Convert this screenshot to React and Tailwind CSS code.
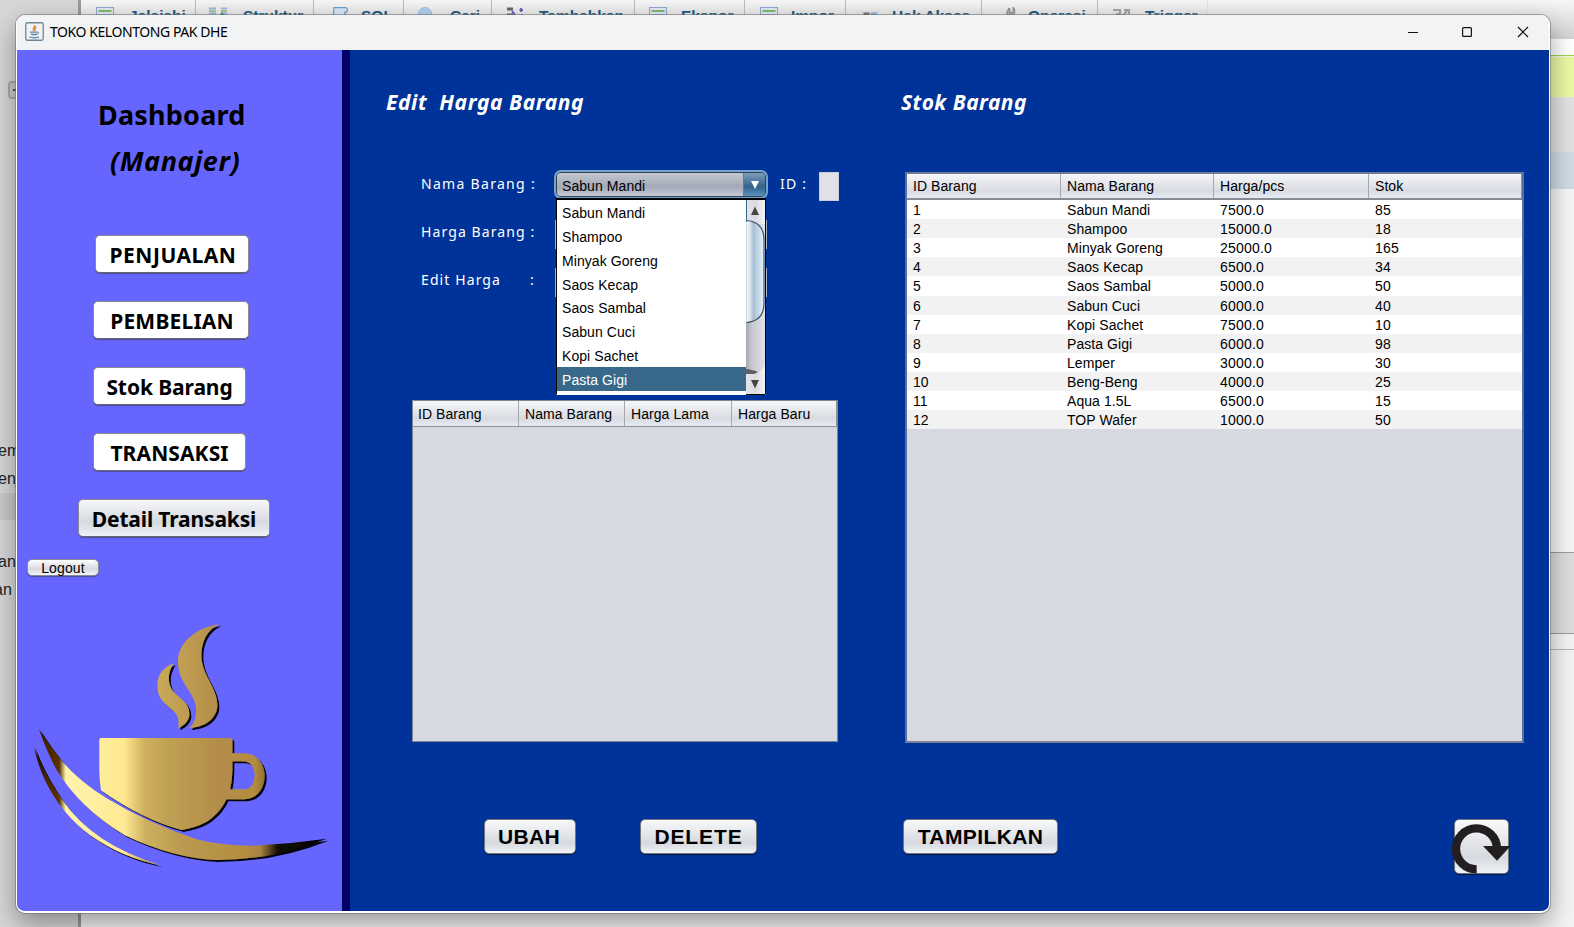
import React from "react";

const ARIAL = "font-['Liberation_Sans',Arial,sans-serif]";

const tabs = [
  { label: "Jelajahi", cls: "w-[115px] pl-[15px] gap-[15px]", icon: "table" },
  { label: "Struktur", cls: "w-[118px] pl-[13px] gap-[16px]", icon: "struct" },
  { label: "SQL", cls: "w-[90px] pl-[17px] gap-[12px]", icon: "sql" },
  { label: "Cari", cls: "w-[88px] pl-[14px] gap-[14px]", icon: "search" },
  { label: "Tambahkan", cls: "w-[143px] pl-[15px] gap-[14px]", icon: "insert" },
  { label: "Ekspor", cls: "w-[110px] pl-[14px] gap-[14px]", icon: "table" },
  { label: "Impor", cls: "w-[101px] pl-[15px] gap-[13px]", icon: "table" },
  { label: "Hak Akses", cls: "w-[136px] pl-[15px] gap-[13px] tracking-[0.05px]", icon: "users" },
  { label: "Operasi", cls: "w-[116px] pl-[18px] gap-[10px]", icon: "wrench" },
  { label: "Trigger", cls: "w-[110px] pl-[15px] gap-[14px]", icon: "trigger" },
];

function TabIcon({ kind }) {
  return (
    <svg width="18" height="18" viewBox="0 0 18 18" className="shrink-0">
      {kind === "table" && (
        <g>
          <rect x="0.5" y="0.5" width="17" height="16" fill="#dfe9f4" stroke="#8fa8d0" />
          <path d="M2.500 4h13" stroke="#7dbb6c" strokeWidth="2" />
          <path d="M2.500 7.500h13M2.500 11h13M7 7v9M11 7v9" stroke="#9fb6d4" />
        </g>
      )}
      {kind === "struct" && (
        <g>
          <path d="M0 1.500h7M0 6.500h7M12 1.500h6M12 6.500h6" stroke="#9bb6dc" strokeWidth="2" />
          <path d="M0 4h7M12 4h6" stroke="#8cc47c" strokeWidth="1.500" />
          <path d="M9 10l4-5 3 3.500-4 5z" fill="#4d9a5c" />
        </g>
      )}
      {kind === "sql" && (
        <path d="M3 0.700h12q3 1.800 0.500 4.300h-1.500v11H1q-1-2 1-3z" fill="#d8e9f8" stroke="#6d9fcf" strokeWidth="1.3" />
      )}
      {kind === "search" && <circle cx="7" cy="7" r="6.5" fill="#b4d0ee" stroke="#9abbe0" />}
      {kind === "insert" && (
        <g>
          <path d="M0 2h6M0 8h6" stroke="#666" strokeWidth="3" />
          <path d="M5 4l3 4" stroke="#5a55c8" strokeWidth="2" />
          <path d="M14 1v4M12.500 3h3.500M15 7v4" stroke="#6a63c4" strokeWidth="2" />
        </g>
      )}
      {kind === "users" && (
        <g>
          <rect x="0" y="4" width="18" height="12" fill="#dfe4e8" />
          <rect x="2.500" y="5.500" width="6" height="6" fill="#7b736b" />
          <rect x="10" y="5.500" width="6" height="6" fill="#8bb2dc" />
        </g>
      )}
      {kind === "wrench" && (
        <path d="M3 16l4-7q-1-5 2-8l1 1v4l3-1V0q3 2 1 8l-6 8z" fill="#a7a9ab" stroke="#8a8c8e" />
      )}
      {kind === "trigger" && (
        <g fill="none" stroke="#a3a6a6" strokeWidth="2.2">
          <path d="M0 3h7v4H3M8 11l6-7M11 3h5v4" />
        </g>
      )}
    </svg>
  );
}

function Desktop() {
  return (
    <div className={"flex h-[927px] w-[1574px] text-[15.5px] " + ARIAL}>
      <div className="flex w-[78px] flex-col bg-[#d6d7d8] text-[16px] leading-7 text-[#222]">
        <div className="mt-[81px] ml-[8px] h-[18px] w-[18px] rounded border-2 border-[#a9a9a9] bg-[#c9c9c9] pt-[6px] pl-[3px]">
          <div className="h-[2px] w-[8px] bg-[#555]" />
        </div>
        <div className="mt-[338px] -ml-[2px]">em</div>
        <div className="-ml-[2px]">enj</div>
        <div className="h-[27px] bg-[#c9cacb]" />
        <div className="mt-[28px] -ml-[2px]">an</div>
        <div className="-ml-[6px]">an</div>
      </div>
      <div className="w-[3px] bg-[#9a9a9a]" />
      <div className="flex flex-1 flex-col bg-[#f4f4f4]">
        <div className="flex h-[39px] bg-gradient-to-b from-[#f6f6f6] to-[#d2d2d2]">
          {tabs.map((t) => (
            <div
              key={t.label}
              className={"flex shrink-0 items-start overflow-hidden border-r border-[#bdbdbd] pt-[7px] whitespace-nowrap last:border-[#e6e6e6] " + t.cls}
            >
              <TabIcon kind={t.icon} />
              <span className="text-[15.5px] leading-[17px] font-bold text-[#235a81]">{t.label}</span>
            </div>
          ))}
        </div>
        <div className="h-[16px] bg-white" />
        <div className="h-[1px] bg-[#a2d246]" />
        <div className="h-[1px] bg-[#f4f8e4]" />
        <div className="h-[40px] bg-[#ebf8a4]" />
        <div className="h-[55px] bg-[#e2e2e2]" />
        <div className="h-[37px] bg-[#d0dce5]" />
        <div className="h-[363px] bg-[#f6f6f6]" />
        <div className="h-[82px] border-y border-[#9d9d9d] bg-[#dddddd]" />
        <div className="h-[16px] border-b border-[#b5b5b5] bg-[#f4f4f4]" />
      </div>
    </div>
  );
}

function TitleBar() {
  return (
    <div className="flex h-[35px] items-center bg-[#f1f3f4] pb-[2px] pl-[8px]">
      <svg width="19" height="19" viewBox="0 0 19 19">
        <rect x="0.75" y="0.75" width="17.5" height="17.5" rx="1.5" fill="#eef2f5" stroke="#6f8796" strokeWidth="1.3" />
        <path d="M9.6 3c1 2-2.6 3.2-1 6M11.4 5c-1.6.8-2 2.2-.8 3.6" fill="none" stroke="#ee8a35" strokeWidth="1.6" />
        <path d="M5 10.2h7.2M6 12.2q3 1 6 0M4.4 15q5 1.6 9.6 0" fill="none" stroke="#5b7f9c" strokeWidth="1.3" />
        <path d="M12.6 10q2.2.2 0 2.4" fill="none" stroke="#5b7f9c" />
      </svg>
      <span className="ml-[6px] flex-1 text-[14px] leading-5 tracking-[-0.43px] text-black">TOKO KELONTONG PAK DHE</span>
      <svg width="140" height="20" viewBox="0 0 140 20" className="mr-[4px]" fill="none" stroke="#111" strokeWidth="1.2">
        <path d="M3 10.5h10" />
        <rect x="57.6" y="5.6" width="8.8" height="8.8" rx="1" />
        <path d="M113 5l10 10M123 5l-10 10" />
      </svg>
    </div>
  );
}

const nav = [
  { label: "PENJUALAN", cls: "ml-[78px] w-[154px] bg-white pl-[2px] tracking-[0.5px]" },
  { label: "PEMBELIAN", cls: "ml-[76px] w-[156px] bg-white pl-[2px] tracking-[0.2px]" },
  { label: "Stok Barang", cls: "ml-[76px] w-[153px] bg-white tracking-[-0.1px]" },
  { label: "TRANSAKSI", cls: "ml-[76px] w-[153px] bg-white tracking-[0.1px]" },
  {
    label: "Detail Transaksi",
    cls: "ml-[61px] w-[192px] bg-gradient-to-b from-[#f7f8fa] via-[#d6d9df] via-60% to-[#eef1f7] tracking-[-0.15px]",
  },
];

function CupLogo() {
  return (
    <svg width="302" height="250" viewBox="90 60 906 750" className="mt-[44px] ml-[13px]">
      <defs>
        <linearGradient id="gold" gradientUnits="userSpaceOnUse" x1="298" y1="0" x2="798" y2="0">
          <stop offset="0" stopColor="#ffee9e" />
          <stop offset="0.15" stopColor="#ffe78e" />
          <stop offset="0.27" stopColor="#d0b060" />
          <stop offset="0.42" stopColor="#bfa052" />
          <stop offset="0.72" stopColor="#b48c4a" />
          <stop offset="0.93" stopColor="#b48d40" />
          <stop offset="1" stopColor="#8f6c30" />
        </linearGradient>
        <linearGradient id="steam" gradientUnits="userSpaceOnUse" x1="470" y1="0" x2="655" y2="0">
          <stop offset="0" stopColor="#c8aa58" />
          <stop offset="1" stopColor="#b48d4a" />
        </linearGradient>
        <linearGradient id="swoosh" gradientUnits="userSpaceOnUse" x1="100" y1="0" x2="985" y2="0">
          <stop offset="0" stopColor="#1c0d00" />
          <stop offset="0.05" stopColor="#4d2600" />
          <stop offset="0.088" stopColor="#5a3208" />
          <stop offset="0.11" stopColor="#fff4ac" />
          <stop offset="0.31" stopColor="#ffe993" />
          <stop offset="0.38" stopColor="#cfb060" />
          <stop offset="0.5" stopColor="#bb9a50" />
          <stop offset="0.72" stopColor="#b48d40" />
          <stop offset="0.77" stopColor="#a78340" />
          <stop offset="0.83" stopColor="#120c02" />
          <stop offset="1" stopColor="#000" />
        </linearGradient>
        <filter id="shade" x="-5%" y="-5%" width="112%" height="112%">
          <feDropShadow dx="6" dy="6" stdDeviation="2.2" floodColor="#000" floodOpacity="0.95" />
        </filter>
      </defs>
      <g filter="url(#shade)">
        <path
          fill="url(#gold)"
          d="M298 419q0-5 5-5H691q6 0 6 6V510Q696 545 690 568H733C755 568 764 546 764 523C764 500 750 484 728 484H697V460H735C768 460 794 490 794 527C794 568 768 598 733 598H679C668 625 640 655 617 667Q590 682 545 690Q430 660 303 571Q298 540 298 510Z"
        />
        <path
          fill="url(#steam)"
          d="M658 73C622 88 604 125 604 165C604 225 652 262 652 315C652 355 615 382 568 384C588 368 592 335 586 312C576 270 534 245 534 185C534 120 600 80 658 73Z"
        />
        <path
          fill="url(#steam)"
          d="M521 190C505 215 502 240 512 262C525 292 570 300 568 345C566 365 550 378 535 384C541 340 520 335 500 315C478 297 470 275 473 245C477 215 500 197 521 190Z"
        />
        <path
          fill="url(#swoosh)"
          d="M117 388Q150 440 187 485Q240 545 320 595Q440 668 590 718Q660 737 760 737Q870 732 980 716Q820 780 650 780Q520 775 375 706Q240 625 170 510Q140 455 117 388Z"
        />
        <path fill="url(#swoosh)" d="M102 440Q130 520 187 600Q280 735 482 795Q370 775 270 705Q190 645 145 560Q115 505 102 440Z" />
      </g>
    </svg>
  );
}

function Sidebar() {
  return (
    <aside className="flex w-[333px] flex-col border-r-8 border-[#000066] bg-[#6666ff] pt-[50px] text-black">
      <h1 className="ml-[81px] h-[30px] text-[27px] leading-[30px] font-bold tracking-[0.2px]">Dashboard</h1>
      <h2 className="mt-[16px] ml-[93px] h-[30px] text-[27px] leading-[30px] font-bold tracking-[0.6px] italic">(Manajer)</h2>
      <nav className="mt-[59px] flex flex-col gap-[28px]">
        {nav.map((n) => (
          <button
            key={n.label}
            className={
              "flex h-[38px] items-center justify-center rounded-[5px] border border-[#8a8a94] border-b-[#66666e] pt-[2px] text-[21px] leading-none font-bold whitespace-nowrap shadow-[0_1px_1px_rgba(60,60,90,0.6)] " +
              n.cls
            }
          >
            {n.label}
          </button>
        ))}
      </nav>
      <button
        className={
          "mt-[22px] ml-[10px] flex h-[17px] w-[72px] items-center justify-center rounded-[5px] border border-[#8a8a94] bg-gradient-to-b from-white via-[#d6d9df] via-60% to-[#f4f6fb] text-[14px] leading-none tracking-[0.15px] shadow-[0_1px_1px_rgba(60,60,90,0.6)] " +
          ARIAL
        }
      >
        Logout
      </button>
      <CupLogo />
    </aside>
  );
}

const options = ["Sabun Mandi", "Shampoo", "Minyak Goreng", "Saos Kecap", "Saos Sambal", "Sabun Cuci", "Kopi Sachet", "Pasta Gigi"];

function Dropdown() {
  return (
    <div className="absolute top-[28px] left-[2px] z-10 flex h-[197px] w-[210px] border border-t-2 border-black border-b-white bg-white">
      <ul className="w-[189px]">
        {options.map((o) => (
          <li
            key={o}
            className={
              "h-[23.87px] pl-[5px] text-[14px] leading-[26.5px] tracking-[0.07px] " +
              (o === "Pasta Gigi" ? "bg-[#39698a] text-white" : "text-black")
            }
          >
            {o}
          </li>
        ))}
      </ul>
      <svg width="19" height="195" viewBox="0 0 19 195">
        <defs>
          <linearGradient id="thumb" x1="0" x2="1" y1="0" y2="0">
            <stop offset="0" stopColor="#fafcfd" />
            <stop offset="0.25" stopColor="#cfdce8" />
            <stop offset="0.4" stopColor="#a9bfd5" />
            <stop offset="0.8" stopColor="#cfe3f0" />
            <stop offset="1" stopColor="#e6f4fa" />
          </linearGradient>
          <linearGradient id="track" x1="0" x2="1" y1="0" y2="0">
            <stop offset="0" stopColor="#a6a8ae" />
            <stop offset="0.3" stopColor="#c6c8ce" />
            <stop offset="1" stopColor="#dfe1e6" />
          </linearGradient>
          <linearGradient id="arrowbg" x1="0" x2="1" y1="0" y2="0">
            <stop offset="0" stopColor="#e4e5e8" />
            <stop offset="0.5" stopColor="#d9dbe0" />
            <stop offset="1" stopColor="#f4f5f7" />
          </linearGradient>
        </defs>
        <rect width="19" height="195" fill="url(#track)" />
        <rect width="19" height="24" fill="url(#arrowbg)" />
        <path d="M0.500 20.500Q18 22 18 40V103Q18 121 0.500 122.500Z" fill="url(#thumb)" />
        <path d="M0.500 20.500Q18 22 18 40V103Q18 121 0.500 122.500" fill="none" stroke="#3a5468" strokeWidth="1.2" />
        <rect width="1" height="22" fill="#39698a" />
        <path d="M5 15L9 6.500l4 8.500z" fill="#444" />
        <path d="M0 173.500h8q6 0 11-8v29H0z" fill="url(#arrowbg)" />
        <path d="M0 169q8 1 12 3l-4 2H0z" fill="#5d5f63" />
        <path d="M5 180h8l-4 8.500z" fill="#444" />
        <path d="M0 194.500h20" stroke="#000" />
      </svg>
    </div>
  );
}

const headGrad = "bg-gradient-to-b from-[#f6f7f9] via-[#d8dbe1] via-70% to-[#e6eaf3]";

function HeadCell({ children, cls }) {
  return (
    <div className={"flex items-center border-r border-[#a4a7ae] text-[14px] leading-none tracking-[0.07px] whitespace-nowrap last:border-[#8d9198] " + cls}>
      {children}
    </div>
  );
}

const stock = [
  ["1", "Sabun Mandi", "7500.0", "85"],
  ["2", "Shampoo", "15000.0", "18"],
  ["3", "Minyak Goreng", "25000.0", "165"],
  ["4", "Saos Kecap", "6500.0", "34"],
  ["5", "Saos Sambal", "5000.0", "50"],
  ["6", "Sabun Cuci", "6000.0", "40"],
  ["7", "Kopi Sachet", "7500.0", "10"],
  ["8", "Pasta Gigi", "6000.0", "98"],
  ["9", "Lemper", "3000.0", "30"],
  ["10", "Beng-Beng", "4000.0", "25"],
  ["11", "Aqua 1.5L", "6500.0", "15"],
  ["12", "TOP Wafer", "1000.0", "50"],
];

function ActionButton({ cls, children }) {
  return (
    <button
      className={
        "flex h-[35px] items-center justify-center rounded-[5px] border border-[#70757e] bg-gradient-to-b from-[#f8f9fa] via-[#d6d9df] via-70% to-[#eef1f6] text-[21px] leading-none font-bold text-black shadow-[0_1px_1px_rgba(0,0,0,0.55)] " +
        ARIAL +
        " " +
        cls
      }
    >
      {children}
    </button>
  );
}

function EditPanel() {
  return (
    <section className="flex w-[550px] flex-col">
      <h3 className="ml-[36px] h-[28px] text-[21px] leading-[28px] font-bold tracking-[0.6px] whitespace-pre text-white italic">
        {"Edit  Harga Barang"}
      </h3>
      <div className="mt-[54px] flex flex-col gap-[20px] pl-[71px] text-[14px] leading-[27px] text-white">
        <div className="flex h-[28px]">
          <span className="w-[133px] tracking-[1.3px]">Nama Barang :</span>
          <div className={"relative flex h-[29px] w-[214px] rounded-[7px] bg-[#73a4d1] p-[2px] " + ARIAL}>
            <div className="flex flex-1 overflow-hidden rounded-[5px] border border-[#33414f]">
              <div className="flex-1 border-r border-[#6d7684] bg-gradient-to-b from-[#c3c7d1] via-[#a3a9b7] via-60% to-[#c6cad6] pl-[5px] leading-[26px] tracking-[0.07px] text-black">
                Sabun Mandi
              </div>
              <div className="flex w-[21px] items-center justify-center bg-gradient-to-b from-[#7d9db8] via-[#33628c] via-60% to-[#5b92bd]">
                <svg width="8" height="8" viewBox="0 0 8 8">
                  <path d="M0 0h8L4 8z" fill="#fff" />
                </svg>
              </div>
            </div>
            <Dropdown />
          </div>
          <span className="ml-[12px] w-[39px] tracking-[1.2px]">ID :</span>
          <div className="mt-[2px] h-[29px] w-[20px] border border-[#c9ccd4] bg-[#dfe1e6]" />
        </div>
        <div className="flex h-[28px]">
          <span className="w-[134px] tracking-[1.1px]">Harga Barang :</span>
          <div className="mt-[2px] h-[29px] w-[212px] bg-[#a9b4cc]" />
        </div>
        <div className="flex h-[28px]">
          <span className="w-[109px] tracking-[1.1px]">Edit Harga</span>
          <span className="w-[25px]">:</span>
          <div className="mt-[2px] h-[29px] w-[212px] bg-[#a9b4cc]" />
        </div>
      </div>
      <div className={"mt-[106px] ml-[62px] h-[342px] w-[426px] border border-[#7f8797] bg-[#d6d9e0] text-black " + ARIAL}>
        <div className={"flex h-[26px] border-b border-[#8d9198] " + headGrad}>
          <HeadCell cls="w-[106px] pl-[5px]">ID Barang</HeadCell>
          <HeadCell cls="w-[106px] pl-[6px]">Nama Barang</HeadCell>
          <HeadCell cls="w-[107px] pl-[6px]">Harga Lama</HeadCell>
          <HeadCell cls="flex-1 pl-[6px]">Harga Baru</HeadCell>
        </div>
      </div>
      <div className="mt-[77px] ml-[134px] flex gap-[64px]">
        <ActionButton cls="w-[92px] pr-[2px] tracking-[0.3px]">UBAH</ActionButton>
        <ActionButton cls="w-[117px] tracking-[0.9px]">DELETE</ActionButton>
      </div>
    </section>
  );
}

function StockPanel() {
  return (
    <section className="flex w-[649px] flex-col">
      <h3 className="ml-px h-[28px] text-[21px] leading-[28px] font-bold tracking-[0.45px] text-white italic">Stok Barang</h3>
      <div className={"mt-[56px] ml-[5px] h-[571px] w-[619px] border-2 border-x-[#5a6f9c] border-t-[#6d7b97] border-b-[#77819a] bg-[#d6d9e0] text-black " + ARIAL}>
        <div className={"flex h-[26px] border-b-2 border-[#868b95] " + headGrad}>
          <HeadCell cls="w-[154px] pl-[6px]">ID Barang</HeadCell>
          <HeadCell cls="w-[153px] pl-[6px]">Nama Barang</HeadCell>
          <HeadCell cls="w-[155px] pl-[6px]">Harga/pcs</HeadCell>
          <HeadCell cls="flex-1 pl-[6px]">Stok</HeadCell>
        </div>
        {stock.map((r) => (
          <div key={r[0]} className="flex h-[19.12px] bg-white text-[14px] leading-[20.8px] tracking-[0.07px] odd:bg-[#f2f2f2]">
            <div className="w-[154px] pl-[6px]">{r[0]}</div>
            <div className="w-[153px] pl-[6px]">{r[1]}</div>
            <div className="w-[155px] pl-[6px] tracking-[0.2px]">{r[2]}</div>
            <div className="pl-[6px] tracking-[0.2px]">{r[3]}</div>
          </div>
        ))}
      </div>
      <div className="mt-[76px] ml-[3px] flex items-start">
        <ActionButton cls="w-[155px] tracking-[0.4px]">TAMPILKAN</ActionButton>
        <button className="ml-[396px] h-[55px] w-[55px] rounded-[5px] border border-[#70757e] bg-gradient-to-b from-[#f8f9fa] via-[#d6d9df] via-70% to-[#eef1f6] shadow-[0_1px_1px_rgba(0,0,0,0.55)]">
          <svg width="60" height="55" viewBox="0 0 180 165" className="mt-px -ml-[3px] max-w-none overflow-visible">
            <path d="M74 145A61.500 61.500 0 1 1 135 82" fill="none" stroke="#231f20" strokeWidth="25" />
            <path d="M93 75H176L135 119Z" fill="#231f20" />
          </svg>
        </button>
      </div>
    </section>
  );
}

export default function App() {
  return (
    <div className="relative h-[927px] w-[1574px] overflow-hidden font-['Noto_Sans','Open_Sans',sans-serif]">
      <Desktop />
      <div className="absolute top-[15px] left-[16px] flex h-[898px] w-[1534px] flex-col overflow-hidden rounded-[9px] border-x border-b-2 border-white bg-white shadow-[0_0_0_1px_rgba(110,110,110,0.55),0_10px_26px_rgba(0,0,0,0.38)]">
        <TitleBar />
        <div className="flex min-h-0 flex-1">
          <Sidebar />
          <main className="flex flex-1 bg-[#003399] pt-[38px]">
            <EditPanel />
            <StockPanel />
          </main>
        </div>
      </div>
    </div>
  );
}
